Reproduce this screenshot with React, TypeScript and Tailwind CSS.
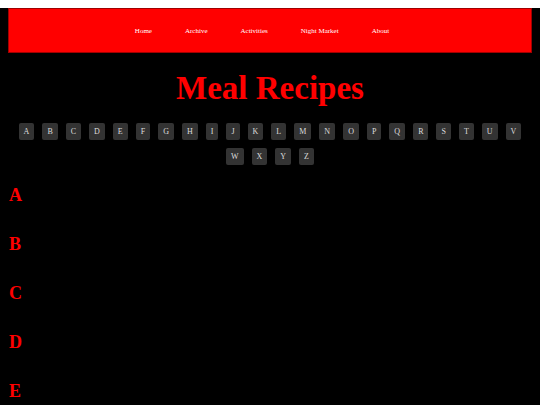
export default function App() {
  const links = ["Home", "Archive", "Activities", "Night Market", "About"];
  const letters = "ABCDEFGHIJKLMNOPQRSTUVWXYZ".split("");

  return (
    <div className="min-h-screen bg-black pb-8" style={{ fontFamily: '"Liberation Serif", "Times New Roman", serif' }}>
      {/* NAV */}
      <nav className="m-2 h-[45px] bg-[#ff0000] border border-[#a00000] flex items-center justify-center">
        <ul className="flex items-center gap-[33px] pr-4 pt-[2px]">
          {links.map((l) => (
            <li key={l} className="text-white text-[7px] leading-none">
              {l}
            </li>
          ))}
        </ul>
      </nav>

      {/* TITLE */}
      <h1 className="text-center text-[#ff0000] font-bold text-[33px] leading-none mt-[19px]">Meal Recipes</h1>

      {/* LETTERS */}
      <div className="flex flex-wrap justify-center px-[12px] mt-[14px]">
        {letters.map((c) => (
          <button
            key={c}
            className="m-1 h-[17px] px-[5px] bg-[#333333] text-[#dddddd] text-[8px] leading-none rounded-[2px] flex items-center justify-center"
          >
            {c}
          </button>
        ))}
      </div>

      {/* SECTIONS */}
      <div className="px-[9px] mt-[17px] flex flex-col gap-[31px]">
        {letters.slice(0, 6).map((c) => (
          <h2 key={c} className="text-[#ff0000] font-bold text-[18px] leading-[18px]">
            {c}
          </h2>
        ))}
      </div>
    </div>
  );
}
